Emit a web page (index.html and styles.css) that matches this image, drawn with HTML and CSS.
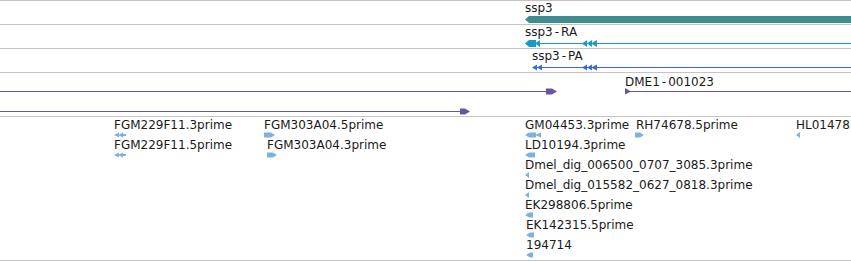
FILE: index.html
```html
<!DOCTYPE html>
<html>
<head>
<meta charset="utf-8">
<link rel="stylesheet" href="styles.css">
</head>
<body>
<div class="view">
  <div class="track t24">
    <svg class="glyphs" width="851" height="23" viewBox="0 1 851 23">
      <polygon class="gene" points="525,19.5 529,16 851,16 851,23 529,23"/>
    </svg>
    <span class="label" style="left:525px;top:0px">ssp3</span>
  </div>
  <div class="track t24">
    <svg class="glyphs" width="851" height="23" viewBox="0 25 851 23">
      <line class="ra" x1="535" y1="43.5" x2="851" y2="43.5"/>
      <polygon class="ra-f" points="525,43.5 529,40 536,40 536,47 529,47"/>
      <polygon class="ra-f" points="535,43.5 540,40 540,47"/>
      <polygon class="ra-f" points="582,43.5 587,40 587,47"/>
      <polygon class="ra-f" points="587,43.5 592,40 592,47"/>
      <polygon class="ra-f" points="591,43.5 597,40 597,47"/>
    </svg>
    <span class="label" style="left:525px;top:0px">ssp3<span class="hy">-</span>RA</span>
  </div>
  <div class="track t24">
    <svg class="glyphs" width="851" height="23" viewBox="0 49 851 23">
      <line class="pa" x1="533" y1="67.5" x2="851" y2="67.5"/>
      <polygon class="pa-f" points="532,67.5 537,64.5 537,70.5"/>
      <polygon class="pa-f" points="537,67.5 542,64.5 542,70.5"/>
      <polygon class="pa-f" points="582,67.5 587,64.5 587,70.5"/>
      <polygon class="pa-f" points="587,67.5 592,64.5 592,70.5"/>
      <polygon class="pa-f" points="591,67.5 597,64.5 597,70.5"/>
    </svg>
    <span class="label" style="left:532px;top:0px">ssp3<span class="hy">-</span>PA</span>
  </div>
  <div class="track t44">
    <svg class="glyphs" width="851" height="43" viewBox="0 73 851 43">
      <line class="pu" x1="0" y1="91.5" x2="547" y2="91.5"/>
      <polygon class="pu-f" points="546,88.5 552,88.5 557,91.5 552,94.5 546,94.5"/>
      <line class="pu" x1="627" y1="91.5" x2="851" y2="91.5"/>
      <polygon class="pu-f" points="625,88 631,91.5 625,94.5"/>
      <line class="pu" x1="0" y1="111.5" x2="461" y2="111.5"/>
      <polygon class="pu-f" points="460,108.5 465,108.5 470,111.5 465,114.5 460,114.5"/>
    </svg>
    <span class="label" style="left:625px;top:2px">DME1<span class="hy">-</span>001023</span>
  </div>
  <div class="track t144">
    <svg class="glyphs" width="851" height="143" viewBox="0 117 851 143">
      <g class="lb">
        <polygon points="114,135 119,132.5 119,137.5"/>
        <polygon points="118,135 123,132.5 123,137.5"/>
        <rect x="122" y="134" width="4" height="2"/>
        <polygon points="264,132.5 271,132.5 275,135 271,137.5 264,137.5"/>
        <polygon points="114,155 119,152.5 119,157.5"/>
        <polygon points="118,155 123,152.5 123,157.5"/>
        <rect x="122" y="154" width="4" height="2"/>
        <polygon points="267,152.5 273,152.5 277,155 273,157.5 267,157.5"/>
        <polygon points="525,135 529,132.5 536,132.5 536,137.5 529,137.5"/>
        <polygon points="535,135 541,132.5 541,137.5"/>
        <polygon points="635,132.5 640,132.5 644,135 640,137.5 635,137.5"/>
        <polygon points="796,135 800,132 800,138"/>
        <polygon points="525,155 529,152.5 535,152.5 535,157.5 529,157.5"/>
        <polygon points="525,175 529,172 529,178"/>
        <polygon points="525,195 529,192 529,198"/>
        <polygon points="525,215 529,212.5 533,212.5 533,217.5 529,217.5"/>
        <polygon points="526,235 530,232.5 534,232.5 534,237.5 530,237.5"/>
        <polygon points="526,255 530,252.5 533,252.5 533,257.5 530,257.5"/>
      </g>
    </svg>
    <span class="label" style="left:114px;top:1px">FGM229F11.3prime</span>
    <span class="label" style="left:264px;top:1px">FGM303A04.5prime</span>
    <span class="label" style="left:525px;top:1px">GM04453.3prime</span>
    <span class="label" style="left:636px;top:1px">RH74678.5prime</span>
    <span class="label" style="left:796px;top:1px">HL01478</span>
    <span class="label" style="left:114px;top:21px">FGM229F11.5prime</span>
    <span class="label" style="left:267px;top:21px">FGM303A04.3prime</span>
    <span class="label" style="left:525px;top:21px">LD10194.3prime</span>
    <span class="label" style="left:525px;top:41px">Dmel_dig_006500_0707_3085.3prime</span>
    <span class="label" style="left:525px;top:61px">Dmel_dig_015582_0627_0818.3prime</span>
    <span class="label" style="left:525px;top:81px">EK298806.5prime</span>
    <span class="label" style="left:526px;top:101px">EK142315.5prime</span>
    <span class="label" style="left:526px;top:121px">194714</span>
  </div>
</div>
</body>
</html>
```

FILE: styles.css
```css
html, body {
  margin: 0;
  padding: 0;
  background: #ffffff;
}
.view {
  width: 851px;
  height: 261px;
  overflow: hidden;
  font-family: "DejaVu Sans", sans-serif;
  font-size: 12px;
  line-height: 14px;
  color: #1a1a1a;
}
.track {
  position: relative;
  border-top: 1px solid #c4c4c4;
  box-sizing: border-box;
}
.t24 { height: 24px; }
.t44 { height: 44px; }
.t144 { height: 145px; border-bottom: 1px solid #c4c4c4; }
.glyphs {
  position: absolute;
  left: 0;
  top: 0;
  display: block;
}
.label {
  position: absolute;
  white-space: nowrap;
}
.hy {
  margin: 0 2px;
}
.gene { fill: #3f8d8e; }
.ra { stroke: #1b9ac2; stroke-width: 1; }
.ra-f { fill: #1b9ac2; }
.pa { stroke: #3a6bcf; stroke-width: 1; }
.pa-f { fill: #3a6bcf; }
.pu { stroke: #6a55a4; stroke-width: 1; }
.pu-f { fill: #6a55a4; }
.lb polygon, .lb rect { fill: #7fb2da; }
```
